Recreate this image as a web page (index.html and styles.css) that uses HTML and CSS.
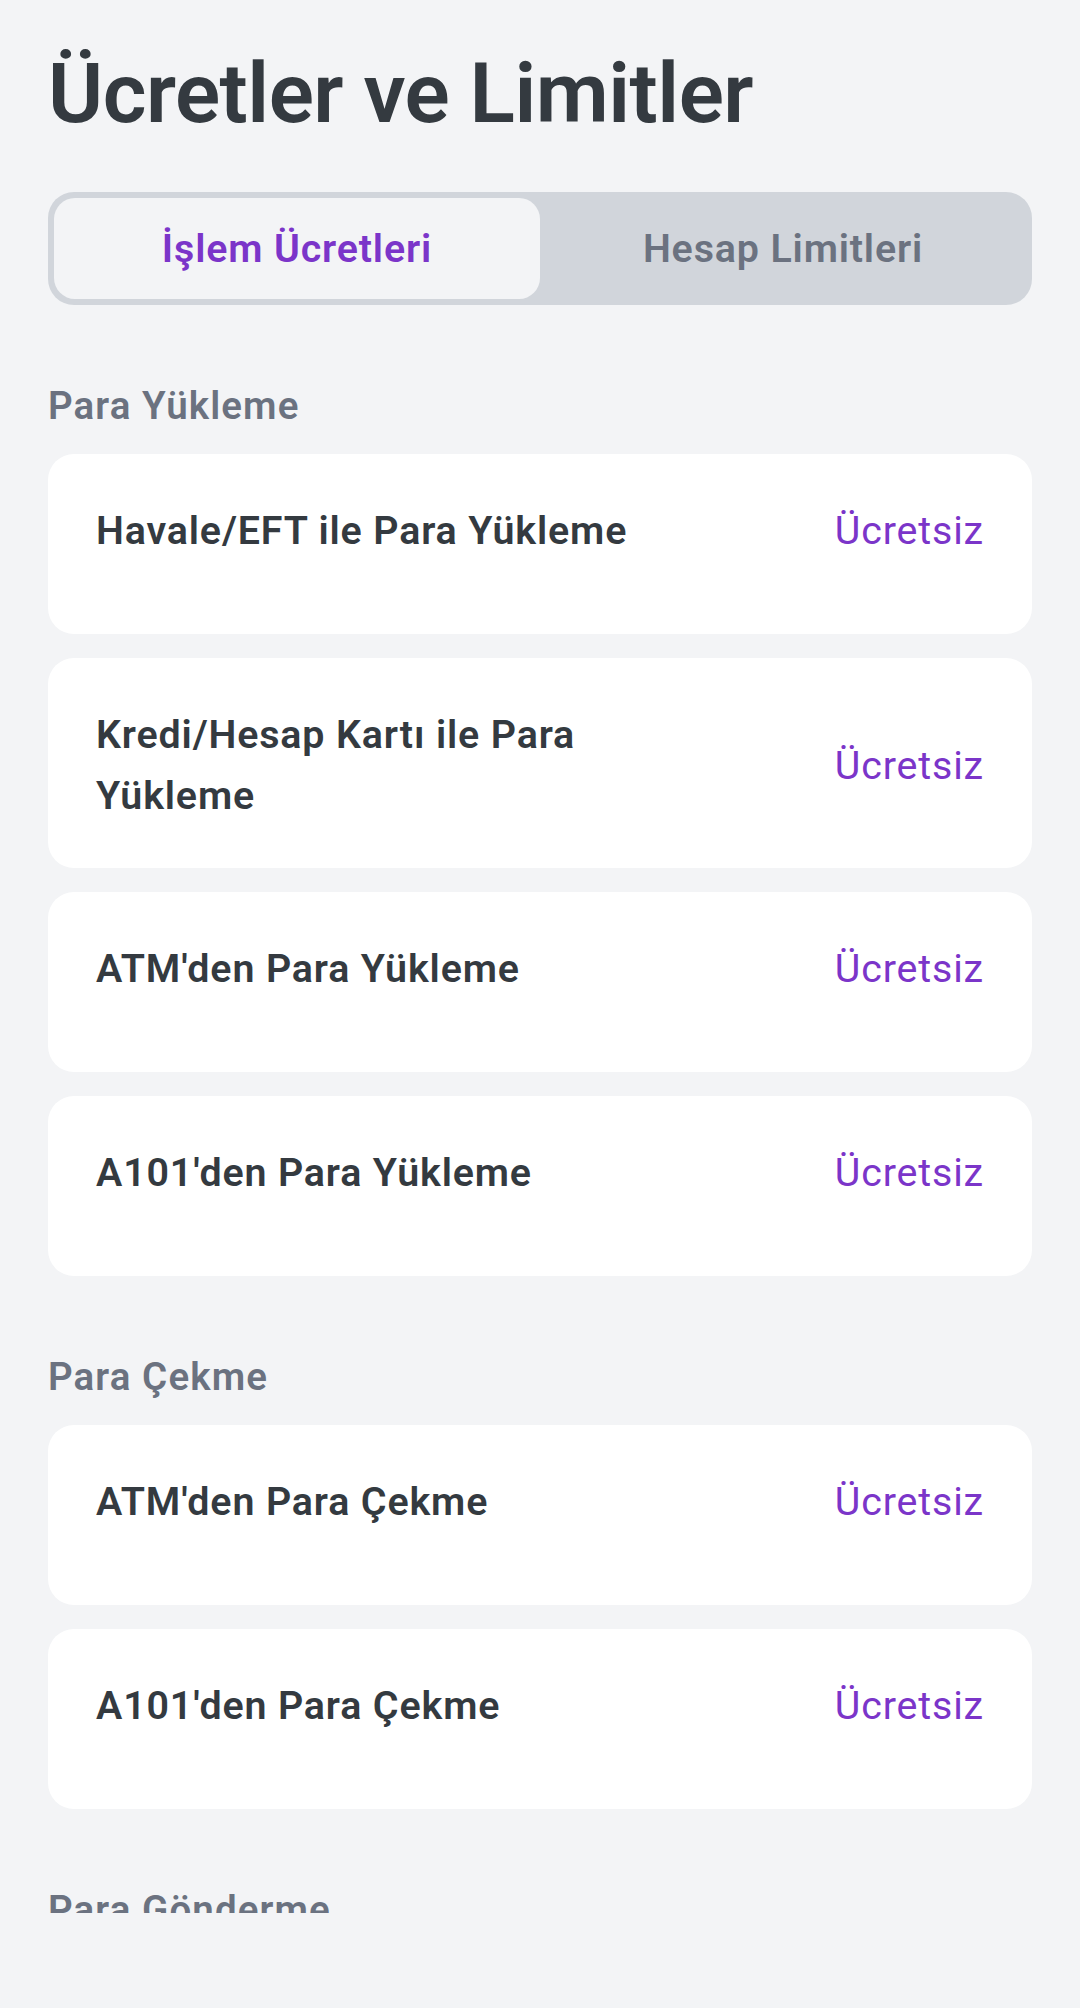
FILE: index.html
```html
<!DOCTYPE html>
<html lang="tr">
<head>
    <meta charset="UTF-8">
    <meta name="viewport" content="width=device-width, initial-scale=1.0">
    <title>Ücretler ve Limitler</title>
    <link rel="stylesheet" href="styles.css">
</head>
<body>
    <div class="screen">
        <h1 class="page-title">Ücretler ve Limitler</h1>

        <div class="tabs">
            <div class="tab active">İşlem Ücretleri</div>
            <div class="tab">Hesap Limitleri</div>
        </div>

        <!-- Para Yükleme -->
        <div class="section">
            <div class="section-title">Para Yükleme</div>
            <div class="fee-card">
                <div class="fee-row">
                    <div class="fee-name">Havale/EFT ile Para Yükleme</div>
                    <div class="fee-value">Ücretsiz</div>
                </div>
            </div>
            <div class="fee-card">
                <div class="fee-row">
                    <div class="fee-name">Kredi/Hesap Kartı ile Para Yükleme</div>
                    <div class="fee-value">Ücretsiz</div>
                </div>
            </div>
            <div class="fee-card">
                <div class="fee-row">
                    <div class="fee-name">ATM'den Para Yükleme</div>
                    <div class="fee-value">Ücretsiz</div>
                </div>
            </div>
            <div class="fee-card">
                <div class="fee-row">
                    <div class="fee-name">A101'den Para Yükleme</div>
                    <div class="fee-value">Ücretsiz</div>
                </div>
            </div>
        </div>

        <!-- Para Çekme -->
        <div class="section">
            <div class="section-title">Para Çekme</div>
            <div class="fee-card">
                <div class="fee-row">
                    <div class="fee-name">ATM'den Para Çekme</div>
                    <div class="fee-value">Ücretsiz</div>
                </div>
            </div>
            <div class="fee-card">
                <div class="fee-row">
                    <div class="fee-name">A101'den Para Çekme</div>
                    <div class="fee-value">Ücretsiz</div>
                </div>
            </div>
        </div>

        <!-- Para Gönderme -->
        <div class="section">
            <div class="section-title">Para Gönderme</div>
            <div class="fee-card">
                <div class="fee-row">
                    <div class="fee-name">IBAN'a Para Gönderme</div>
                    <div class="fee-value">Ücretsiz</div>
                </div>
            </div>
        </div>
    </div>
</body>
</html>
```

FILE: styles.css
```css
body {
    margin: 0;
    background-color: #f3f4f6;
    font-family: Roboto, "Noto Sans", sans-serif;
}

.screen {
    height: 1913px;
    overflow: hidden;
    padding: 43px 48px 0;
    box-sizing: border-box;
}

.page-title {
    margin: 0;
    font-size: 84px;
    line-height: 101px;
    font-weight: 600;
    letter-spacing: -0.5px;
    color: #343a40;
}

.tabs {
    display: flex;
    margin-top: 48px;
    padding: 6px;
    background-color: #d1d5db;
    border-radius: 26px;
}

.tab {
    flex: 1;
    display: flex;
    justify-content: center;
    align-items: center;
    height: 101px;
    border-radius: 21px;
    font-size: 39.4px;
    font-weight: 600;
    letter-spacing: 0.85px;
    color: #6b7280;
}

.tab.active {
    background-color: #f3f4f6;
    color: #7b35c9;
}

.section {
    margin-top: 73px;
}

.section-title {
    font-size: 38.5px;
    line-height: 55px;
    font-weight: 600;
    letter-spacing: 1.1px;
    color: #6b7280;
    margin-bottom: 21px;
}

.fee-card {
    box-sizing: border-box;
    min-height: 180px;
    padding: 46px 48px 42px;
    margin-bottom: 24px;
    background-color: #fff;
    border-radius: 26px;
    font-size: 39.4px;
    line-height: 61px;
    letter-spacing: 0.85px;
}

.fee-row {
    display: flex;
    justify-content: space-between;
    align-items: center;
}

.fee-name {
    max-width: 600px;
    font-weight: 600;
    color: #343a40;
}

.fee-value {
    color: #7b35c9;
}
```
